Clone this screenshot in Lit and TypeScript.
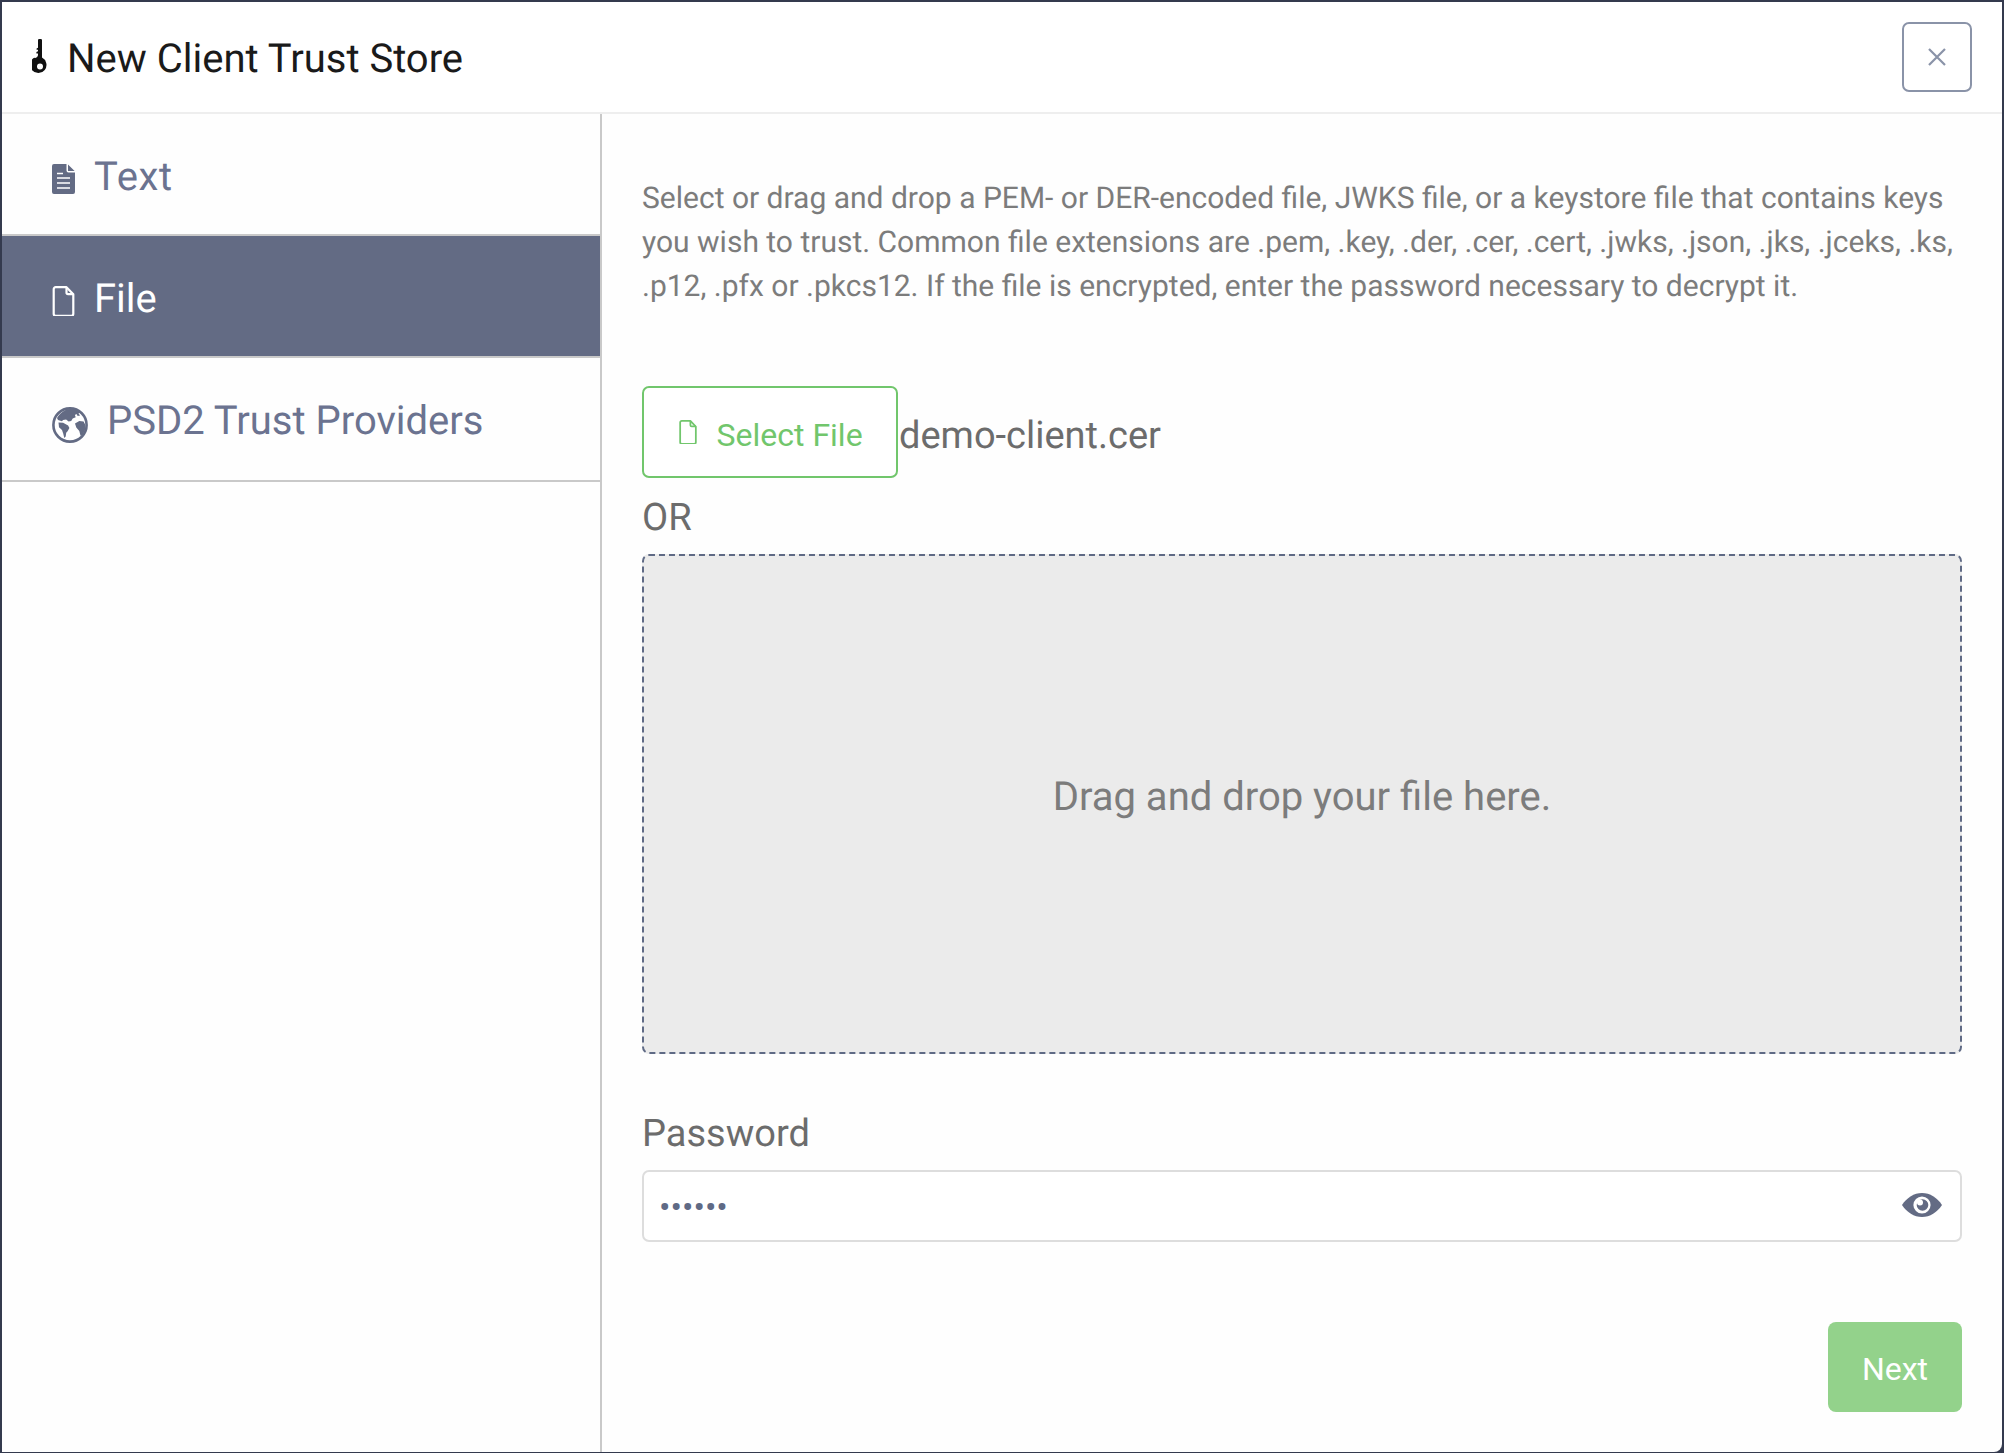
import { LitElement, html, css, svg } from "lit";
import { customElement } from "lit/decorators.js";

const fileOutline = svg`<path d="M1.2 3.2a2 2 0 0 1 2-2H14l6.8 7v19.6a2 2 0 0 1-2 2H3.2a2 2 0 0 1-2-2z" fill="none" stroke="currentColor" stroke-width="2.2" stroke-linejoin="round"/><path d="M14 1.2v5.3a1.6 1.6 0 0 0 1.6 1.6h5.2" fill="none" stroke="currentColor" stroke-width="2.2"/>`;

@customElement("app-root")
export class AppRoot extends LitElement {
  static styles = css`
    :host {
      display: block;
      width: 2004px;
      height: 1453px;
      box-sizing: border-box;
      padding: 2px 2px 1px 2px;
      background: #343a4e;
      font-family: Roboto, "Liberation Sans", sans-serif;
      text-rendering: geometricPrecision;
    }
    .modal {
      height: 100%;
      background: #fefefe;
      border-radius: 0 0 8px 0;
      display: flex;
      flex-direction: column;
      overflow: hidden;
    }
    .header {
      flex: none;
      height: 110px;
      border-bottom: 2px solid #eeeeee;
      display: flex;
      align-items: center;
      padding: 0 30px;
      background: #fff;
    }
    .key {
      flex: none;
      width: 16px;
      height: 36px;
      margin-right: 19px;
      color: #111;
    }
    .title {
      flex: 1;
      font-size: 40px;
      color: #1a1a1a;
      line-height: 50px;
      margin-top: 3px;
    }
    .close {
      width: 70px;
      height: 70px;
      box-sizing: border-box;
      border: 2px solid #8a93a8;
      border-radius: 7px;
      background: #fff;
      display: flex;
      align-items: center;
      justify-content: center;
      padding: 0;
      color: #8a93a8;
    }
    .close svg { width: 18px; height: 18px; }
    .body { flex: 1; display: flex; min-height: 0; }
    .nav {
      flex: none;
      width: 600px;
      box-sizing: border-box;
      border-right: 2px solid #c9c9c9;
    }
    .item {
      box-sizing: border-box;
      height: 122px;
      border-bottom: 2px solid #c9c9c9;
      display: flex;
      align-items: center;
      padding: 0 0 0 50px;
      color: #6b7390;
      font-size: 40px;
    }
    .item.tall { height: 124px; }
    .item.active { background: #636b84; color: #fff; }
    .item .ic { flex: none; width: 23px; height: 30px; margin-top: 10px; margin-right: 19px; color: #636b84; }
    .item.active .ic { color: #fff; }
    .item .globe { width: 36px; height: 36px; margin-top: 12px; margin-right: 19px; }
    .item span { margin-top: 5px; }
    .item.tall span { margin-top: 3px; }
    .item .wide { letter-spacing: 0.7px; }
    .content {
      flex: 1;
      box-sizing: border-box;
      padding: 63px 40px 0 40px;
      display: flex;
      flex-direction: column;
    }
    .desc {
      margin: 0 0 77px;
      font-size: 30px;
      line-height: 44px;
      color: #7c7c7c;
      white-space: nowrap;
    }
    .file-row { display: flex; align-items: center; height: 92px; }
    .select {
      box-sizing: border-box;
      width: 256px;
      height: 92px;
      border: 2px solid #71c66c;
      border-radius: 7px;
      background: #fff;
      color: #71c66c;
      font: inherit;
      font-size: 32px;
      display: flex;
      align-items: center;
      padding: 0 0 0 34px;
    }
    .select svg { width: 20px; height: 24px; margin-right: 18.5px; }
    .select span { padding-top: 6px; }
    .fname { font-size: 38px; color: #6c6c6c; margin-top: 7px; margin-left: 1px; }
    .or { height: 76px; line-height: 80px; font-size: 38px; color: #6c6c6c; }
    .drop {
      box-sizing: border-box;
      height: 500px;
      background: #ebebeb;
      border: 2px dashed #5f6a85;
      border-radius: 7px;
      display: flex;
      align-items: center;
      justify-content: center;
      padding-bottom: 15px;
      font-size: 40px;
      color: #7c7c7c;
    }
    .label {
      margin: 53px 0 9px;
      font-size: 38px;
      line-height: 54px;
      color: #6c6c6c;
    }
    .field { position: relative; }
    input {
      display: block;
      width: 100%;
      height: 72px;
      box-sizing: border-box;
      border: 2px solid #dddddd;
      border-radius: 7px;
      background: #fff;
      padding: 2px 60px 0 15px;
      font-family: inherit;
      font-size: 34px;
      color: #5f6a85;
      outline: none;
    }
    .eye {
      position: absolute;
      right: 20px;
      top: 23px;
      width: 40px;
      height: 24px;
    }
    .actions { display: flex; justify-content: flex-end; margin-top: 80px; }
    .next {
      width: 134px;
      height: 90px;
      border: none;
      border-radius: 8px;
      background: #93d28b;
      color: #fff;
      font: inherit;
      font-size: 32px;
      padding: 4px 0 0;
    }
  `;

  render() {
    return html`
      <div class="modal">
        <div class="header">
          <svg class="key" viewBox="0 0 16 36">
            <path fill="currentColor" fill-rule="evenodd" d="M6 1.600a2 2 0 0 1 4 0V18.600a8.200 8.200 0 1 1-7.800 .2 3 3 0 0 0 3.800-2.800V14.500h-1.600v-1.400l1.600-.8v-1.500h-1.400V9.600l1.400-.8zM8 24.400a3 3 0 1 0 0 6 3 3 0 0 0 0-6z"/>
          </svg>
          <div class="title">New Client Trust Store</div>
          <button class="close" aria-label="Close">
            <svg viewBox="0 0 18 18"><path d="M1 1l16 16M17 1L1 17" stroke="currentColor" stroke-width="2.2" fill="none"/></svg>
          </button>
        </div>
        <div class="body">
          <div class="nav">
            <div class="item">
              <svg class="ic" viewBox="0 0 23 30">
                <path fill="currentColor" d="M2 0H14.500V6.500a2 2 0 0 0 2 2H23V28a2 2 0 0 1-2 2H2a2 2 0 0 1-2-2V2a2 2 0 0 1 2-2zM16 .4L22.600 7H16z"/>
                <path d="M5 9.500h6M5 14h13M5 19h13M5 24h13" stroke="#fff" stroke-width="1.400" fill="none"/>
              </svg>
              <span class="wide">Text</span>
            </div>
            <div class="item active">
              <svg class="ic" viewBox="0 0 22 30">${fileOutline}</svg>
              <span>File</span>
            </div>
            <div class="item tall">
              <svg class="ic globe" viewBox="0 0 36 36">
                <circle cx="18" cy="18" r="16.600" fill="#fff" stroke="currentColor" stroke-width="2.600"/>
                <path fill="currentColor" d="M5 11C8 6 13 2 18 2c5 0 8 1 10 3l-1.500 1.500 1.600 2-2.400 .6-1.300-2-1.500 1 .8 2.200-3 1.300-1.500 2.400-2.600 .4-2.500-2-3 .6-1.200 1.200L6 13z"/>
                <path fill="currentColor" d="M6.500 15.500l4.600 .2 5 2.700 1.300 2.600-1.800 3.200-1.400 1.600-.5 3.600-1.400 1.600-1.100-4.400-1.200-3.600-3-2.700z"/>
                <path fill="currentColor" d="M23 16.500l4.300-2.400 4.300 .4 1.800 3.500-.3 5-2.200 4.600-2.400 1.200-1.200-4.800-3-3.400z"/>
              </svg>
              <span>PSD2 Trust Providers</span>
            </div>
          </div>
          <div class="content">
            <p class="desc">Select or drag and drop a PEM- or DER-encoded file, JWKS file, or a keystore file that contains keys<br />you wish to trust. Common file extensions are .pem, .key, .der, .cer, .cert, .jwks, .json, .jks, .jceks, .ks,<br />.p12, .pfx or .pkcs12. If the file is encrypted, enter the password necessary to decrypt it.</p>
            <div class="file-row">
              <button class="select">
                <svg viewBox="0 0 22 30">${fileOutline}</svg>
                <span>Select File</span>
              </button>
              <span class="fname">demo-client.cer</span>
            </div>
            <div class="or">OR</div>
            <div class="drop">Drag and drop your file here.</div>
            <div class="label">Password</div>
            <div class="field">
              <input type="password" value="secret" />
              <svg class="eye" viewBox="0 0 40 24">
                <path fill="#636b84" d="M0 12C5 4.500 12 0 20 0s15 4.500 20 12c-5 7.500-12 12-20 12S5 19.500 0 12z"/>
                <circle cx="20" cy="12" r="8.600" fill="#fff"/>
                <circle cx="20.500" cy="12" r="5.800" fill="#636b84"/>
                <path d="M15 9.500a3 3 0 0 1 6 0 3 3 0 0 1-6 0z" fill="#fff"/>
              </svg>
            </div>
            <div class="actions"><button class="next">Next</button></div>
          </div>
        </div>
      </div>
    `;
  }
}
